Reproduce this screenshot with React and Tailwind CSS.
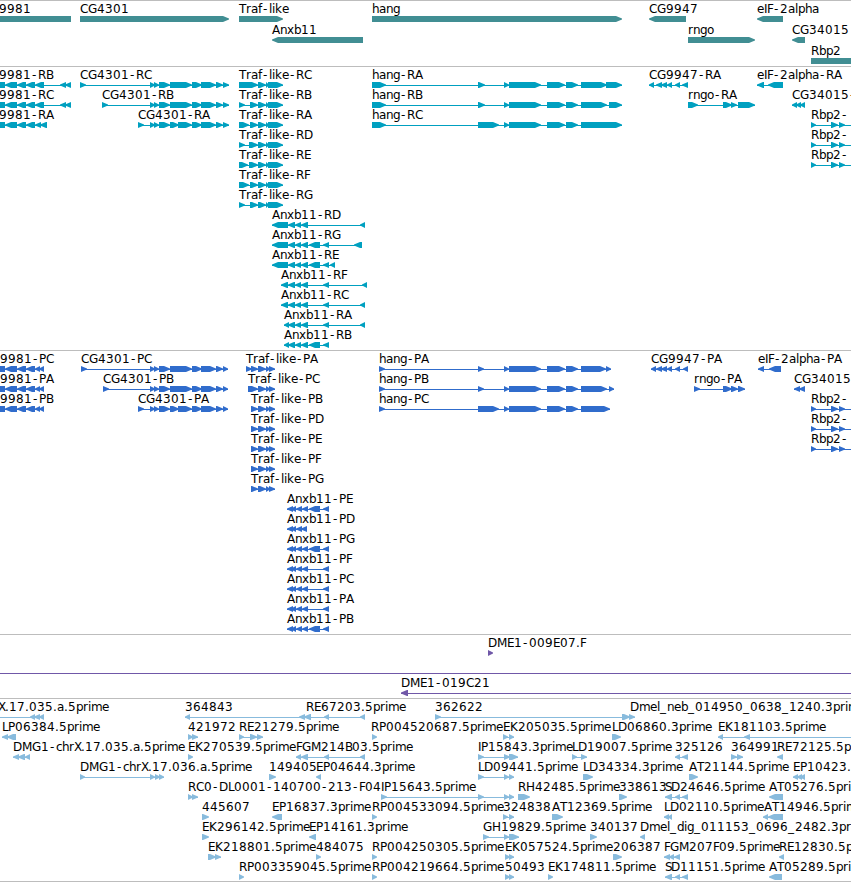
import React from "react";

// Horizontal advance of each label character, in pixels.
const ADVANCE = {
  A: 8, B: 7, C: 8, D: 9, E: 7, F: 6, G: 9, H: 9, I: 3, K: 8, L: 6, M: 10, P: 7, R: 8, S: 6, T: 7, X: 7,
  a: 7, b: 7, c: 6, d: 7, e: 7, f: 4, g: 7, h: 7, i: 3, k: 7, l: 3, m: 11, n: 7, o: 7, p: 7, r: 5, x: 7,
  "-": 7, ".": 4, _: 7,
};

function positions(label, start) {
  let x = start;
  return [...label]
    .map((ch) => {
      const here = ch === "-" ? x + 1 : x;
      x += ADVANCE[ch] ?? 8;
      return here;
    })
    .join(" ");
}

function arrow([a, b], dir, y) {
  const t = Math.min(b - a, 6);
  return dir === "<"
    ? `M${b} ${y}H${a + t}L${a} ${y + 2.5}V${y + 3.5}L${a + t} ${y + 6}H${b}Z`
    : `M${a} ${y}H${b - t}L${b} ${y + 2.5}V${y + 3.5}L${b - t} ${y + 6}H${a}Z`;
}

// A feature is [label, label x, direction, exons, optional line span].
function Feature({ data }) {
  const [label, x, dir, exons = [], span] = data;
  const from = span ? span[0] : exons[0]?.[0];
  const to = span ? span[1] : exons[exons.length - 1]?.[1];
  return (
    <g>
      {(exons.length > 1 || span) && <rect x={from} y="18" width={to - from} height="1" />}
      {exons.map((e, i) => (
        <path key={i} d={arrow(e, dir, 15)} />
      ))}
      {label && (
        <text x={positions(label, x)} y="12" className="fill-black">
          {label}
        </text>
      )}
    </g>
  );
}

function Track({ rows, height, color, rowHeight = "h-5" }) {
  return (
    <section className={`flex shrink-0 flex-col border-t border-[#bdbdbd] ${height} ${color}`}>
      {rows.map((row, i) => (
        <svg key={i} className={`block w-full shrink-0 overflow-visible ${rowHeight}`}>
          {row.map((f, j) => (
            <Feature key={j} data={f} />
          ))}
        </svg>
      ))}
    </section>
  );
}

const genes = [
  [
    ["9981", -1, "<", [[-20, 71]]],
    ["CG4301", 80, ">", [[80, 229]]],
    ["Traf-like", 239, ">", [[239, 283]]],
    ["hang", 372, ">", [[372, 622]]],
    ["CG9947", 649, "<", [[649, 686]]],
    ["eIF-2alpha", 757, "<", [[757, 783]]],
  ],
  [
    ["Anxb11", 272, "<", [[272, 363]]],
    ["rngo", 688, ">", [[688, 755]]],
    ["CG34015", 792, "<", [[792, 805]]],
  ],
  [["Rbp2", 811, ">", [[811, 870]]]],
];

const cgLeft = [[-8, 5], [5, 17], [17, 26], [26, 35]];
const cgMid = [[150, 155], [154, 159], [159, 170]];
const cgTail = [[192, 202], [201, 216], [216, 223]];
const trafEnd = [[258, 266], [266, 269], [268, 283]];
const hangMid = [[504, 509], [509, 541], [547, 565], [566, 578]];
const anx = [[288, 295], [295, 301], [301, 308]];
const rbp = [[811, 816], [831, 838], [839, 845]];
const rbpSpan = [811, 851];

const transcripts = [
  [
    ["9981-RB", -1, "<", [...cgLeft, [35, 44], [60, 66], [65, 71]]],
    ["CG4301-RC", 80, ">", [[80, 86], ...cgMid, [170, 192], ...cgTail, [223, 229]]],
    ["Traf-like-RC", 239, ">", [[239, 258], ...trafEnd]],
    ["hang-RA", 372, ">", [[372, 386], [478, 485], ...hangMid, [581, 607], [606, 622]]],
    ["CG9947-RA", 649, "<", [[649, 654], [656, 662], [661, 667], [667, 672], [675, 680], [682, 688]]],
    ["eIF-2alpha-RA", 757, "<", [[757, 764], [768, 783]]],
  ],
  [
    ["9981-RC", -1, "<", [...cgLeft, [35, 44], [60, 66], [65, 71]]],
    ["CG4301-RB", 102, ">", [[102, 108], ...cgMid, [170, 192], ...cgTail, [223, 229]]],
    ["Traf-like-RB", 239, ">", [[239, 245], [250, 258], ...trafEnd]],
    ["hang-RB", 372, ">", [[372, 386], [478, 485], ...hangMid, [581, 607], [609, 622]]],
    ["rngo-RA", 688, ">", [[688, 698], [723, 732], [731, 737], [738, 755]]],
    ["CG34015-", 792, "<", [[792, 797], [796, 801], [800, 805]]],
  ],
  [
    ["9981-RA", -1, "<", [...cgLeft, [35, 41], [40, 47]]],
    ["CG4301-RA", 138, ">", [[138, 144], ...cgMid, [170, 179], [178, 192], ...cgTail, [223, 229]]],
    ["Traf-like-RA", 239, ">", [[239, 249], [250, 258], ...trafEnd]],
    ["hang-RC", 372, ">", [[372, 386], [478, 499], ...hangMid, [581, 622]]],
    ["Rbp2-", 811, ">", rbp, rbpSpan],
  ],
  [
    ["Traf-like-RD", 239, ">", [[239, 245], [249, 258], ...trafEnd]],
    ["Rbp2-", 811, ">", rbp, rbpSpan],
  ],
  [
    ["Traf-like-RE", 239, ">", [[239, 248], [249, 258], ...trafEnd]],
    ["Rbp2-", 811, ">", rbp, rbpSpan],
  ],
  [["Traf-like-RF", 239, ">", [[239, 249], [250, 258], ...trafEnd]]],
  [["Traf-like-RG", 239, ">", [[239, 245], [250, 258], ...trafEnd]]],
  [["Anxb11-RD", 272, "<", [[272, 288], ...anx, [360, 365]]]],
  [["Anxb11-RG", 272, "<", [[272, 288], ...anx, [309, 320], [323, 329], [354, 362]]]],
  [["Anxb11-RE", 272, "<", [[272, 288], ...anx, [309, 320], [323, 329], [330, 335]]]],
  [["Anxb11-RF", 281, "<", [[281, 288], ...anx, [323, 329], [362, 367]]]],
  [["Anxb11-RC", 281, "<", [[281, 288], ...anx, [323, 329], [360, 365]]]],
  [["Anxb11-RA", 284, "<", [[284, 289], ...anx, [323, 329], [360, 365]]]],
  [["Anxb11-RB", 284, "<", [[284, 289], ...anx, [309, 320], [323, 329]]]],
];

const trafP = [[258, 266], [266, 270], [269, 275]];
const anxP = [[287, 293], [291, 296], [296, 302], [302, 308]];

const proteins = [
  [
    ["9981-PC", 0, "<", [...cgLeft, [35, 40], [39, 44]]],
    ["CG4301-PC", 81, ">", [[81, 87], ...cgMid, [170, 192], ...cgTail, [223, 228]]],
    ["Traf-like-PA", 246, ">", [[246, 252], [251, 258], ...trafP]],
    ["hang-PA", 379, ">", [[379, 385], [478, 484], ...hangMid, [581, 606], [606, 611]]],
    ["CG9947-PA", 651, "<", [[651, 656], [656, 662], [661, 667], [667, 672], [675, 680], [683, 688]]],
    ["eIF-2alpha-PA", 758, "<", [[758, 764], [769, 781]]],
  ],
  [
    ["9981-PA", 0, "<", [...cgLeft, [35, 40], [39, 44]]],
    ["CG4301-PB", 103, ">", [[103, 109], ...cgMid, [170, 192], ...cgTail, [223, 228]]],
    ["Traf-like-PC", 248, ">", [[248, 258], ...trafP]],
    ["hang-PB", 379, ">", [[379, 385], [478, 484], ...hangMid, [581, 607], [609, 614]]],
    ["rngo-PA", 694, ">", [[694, 700], [723, 732], [731, 738], [738, 745]]],
    ["CG34015", 794, "<", [[794, 800], [799, 805]]],
  ],
  [
    ["9981-PB", 0, "<", [...cgLeft, [35, 40], [39, 44]]],
    ["CG4301-PA", 138, ">", [[138, 144], ...cgMid, [170, 179], [178, 192], ...cgTail, [223, 228]]],
    ["Traf-like-PB", 251, ">", [[251, 258], ...trafP]],
    ["hang-PC", 379, ">", [[379, 385], [478, 499], ...hangMid, [581, 610]]],
    ["Rbp2-", 811, ">", rbp, rbpSpan],
  ],
  [
    ["Traf-like-PD", 251, ">", [[251, 258], ...trafP]],
    ["Rbp2-", 811, ">", rbp, rbpSpan],
  ],
  [
    ["Traf-like-PE", 251, ">", [[251, 258], ...trafP]],
    ["Rbp2-", 811, ">", rbp, rbpSpan],
  ],
  [["Traf-like-PF", 251, ">", [[251, 258], ...trafP]]],
  [["Traf-like-PG", 251, ">", [[251, 258], ...trafP]]],
  [["Anxb11-PE", 287, "<", [...anxP, [309, 320], [323, 329]]]],
  [["Anxb11-PD", 287, "<", [[287, 293], [291, 296], [296, 302], [301, 307]]]],
  [["Anxb11-PG", 287, "<", [...anxP, [309, 320], [323, 329]]]],
  [["Anxb11-PF", 287, "<", [...anxP, [323, 329]]]],
  [["Anxb11-PC", 287, "<", [...anxP, [323, 329]]]],
  [["Anxb11-PA", 287, "<", [...anxP, [323, 329]]]],
  [["Anxb11-PB", 287, "<", [...anxP, [309, 320], [323, 329]]]],
];

const clones = [
  [["DME1-009E07.F", 488, ">", [[488, 493]]]],
  [["", 0, ">", [], [0, 851]]],
  [["DME1-019C21", 401, "<", [[401, 408]], [401, 851]]],
];

const ests = [
  [
    ["X.17.035.a.5prime", -2, "<", [[30, 35], [34, 40], [39, 44]], [0, 44]],
    ["364843", 185, "<", [[185, 190], [299, 305]]],
    ["RE67203.5prime", 306, "<", [[304, 311], [324, 329], [360, 365]]],
    ["362622", 435, ">", [[435, 441], [622, 630], [629, 635]]],
    ["Dmel_neb_014950_0638_1240.3prim", 630, ">"],
  ],
  [
    ["LP06384.5prime", 2, "<", [[2, 8], [7, 16]]],
    ["421972", 188, ">", [[188, 193], [192, 198]]],
    ["RE21279.5prime", 239, ">", [[239, 244], [250, 257], [257, 263]]],
    ["RP004520687.5prime", 371, ">", [[372, 377]]],
    ["EK205035.5prime", 503, ">", [[503, 508], [509, 514]]],
    ["LD06860.3prime", 612, ">", [[612, 621]]],
    ["EK181103.5prime", 718, "<", [[718, 723], [744, 750]], [718, 851]],
  ],
  [
    ["DMG1-chrX.17.035.a.5prime", 13, "<", [[13, 19], [18, 25], [25, 30]]],
    ["EK270539.5prime", 188, ">", [[188, 193]]],
    ["FGM214B03.5prime", 296, "<", [[296, 301], [301, 308], [324, 329], [360, 365]]],
    ["IP15843.3prime", 478, ">", [[478, 484], [504, 510], [509, 518]]],
    ["LD19007.5prime", 572, ">", [[572, 577], [581, 587]]],
    ["325126", 675, "<", [[675, 680], [682, 688]]],
    ["364991", 731, ">", [[731, 737], [737, 743]]],
    ["RE72125.5p", 777, "<", [[777, 783]]],
  ],
  [
    ["DMG1-chrX.17.036.a.5prime", 80, ">", [[80, 85], [150, 155], [155, 160], [159, 164]]],
    ["149405", 269, ">", [[269, 276]]],
    ["EP04644.3prime", 316, "<", [[316, 321]]],
    ["LD09441.5prime", 478, ">", [[478, 484], [504, 509], [509, 514]]],
    ["LD34334.3prime", 583, ">", [[583, 593]]],
    ["AT21144.5prime", 689, ">", [[689, 698]]],
    ["EP10423.", 793, "<", [[793, 798], [797, 802], [800, 805]]],
  ],
  [
    ["RC0-DL0001-140700-213-F04", 188, ">", [[188, 193], [192, 198]]],
    ["IP15643.5prime", 381, ">", [[381, 387], [478, 484], [504, 509], [509, 514]]],
    ["RH42485.5prime", 518, ">", [[518, 530]]],
    ["338613", 619, ">", [[619, 627]]],
    ["SD24646.5prime", 665, "<", [[665, 672], [675, 680], [682, 688]]],
    ["AT05276.5pri", 769, "<", [[769, 783]]],
  ],
  [
    ["445607", 202, ">", [[202, 209]]],
    ["EP16837.3prime", 272, "<", [[272, 282]]],
    ["RP004533094.5prime", 372, ">", [[372, 377]]],
    ["324838", 503, ">", [[503, 508], [509, 514]]],
    ["AT12369.5prime", 552, ">", [[552, 563]]],
    ["LD02110.5prime", 664, "<", [[664, 669], [668, 672]]],
    ["AT14946.5prim", 764, "<", [[763, 768], [768, 783]]],
  ],
  [
    ["EK296142.5prime", 202, ">", [[202, 209]]],
    ["EP14161.3prime", 309, "<", [[309, 316]]],
    ["GH19829.5prime", 483, ">", [[483, 489], [504, 509], [509, 519]]],
    ["340137", 590, ">", [[590, 597]]],
    ["Dmel_dig_011153_0696_2482.3prim", 640, "<", [[640, 645]]],
  ],
  [
    ["EK218801.5prime", 208, ">", [[208, 216], [215, 221]]],
    ["484075", 316, ">", [[316, 321]]],
    ["RP004250305.5prime", 372, ">", [[372, 377]]],
    ["EK057524.5prime", 505, ">", [[505, 510], [509, 514]]],
    ["206387", 613, ">", [[613, 622]]],
    ["FGM207F09.5prime", 664, "<", [[664, 670], [669, 674], [674, 680]]],
    ["RE12830.5p", 779, "<", [[779, 784]]],
  ],
  [
    ["RP003359045.5prime", 239, ">", [[239, 244]]],
    ["RP004219664.5prime", 372, ">", [[372, 377]]],
    ["50493", 505, ">", [[505, 510], [509, 514]]],
    ["EK174811.5prime", 548, ">", [[548, 553]]],
    ["SD11151.5prime", 665, "<", [[665, 672], [675, 680], [682, 688]]],
    ["AT05289.5pri", 769, "<", [[769, 782]]],
  ],
];

export default function App() {
  return (
    <main className="flex h-[882px] w-[851px] flex-col overflow-hidden bg-white font-['DejaVu_Sans',sans-serif] text-[12px]">
      <Track rows={genes} height="h-[66px]" rowHeight="h-[21px]" color="fill-[#418e93]" />
      <Track rows={transcripts} height="h-[284px]" color="fill-[#00a0c0]" />
      <Track rows={proteins} height="h-[284px]" color="fill-[#306ccc]" />
      <Track rows={clones} height="h-16" color="fill-[#7058a8]" />
      <Track rows={ests} height="h-[183px]" color="fill-[#88bbdd]" />
      <div className="h-px shrink-0 bg-[#bdbdbd]" />
    </main>
  );
}
